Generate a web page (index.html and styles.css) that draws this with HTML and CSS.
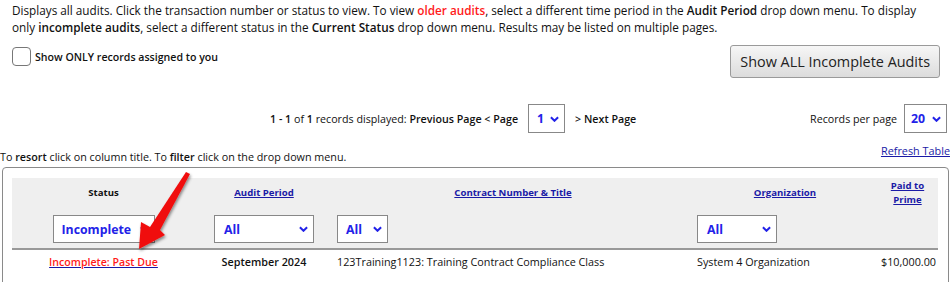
FILE: index.html
```html
<!DOCTYPE html>
<html>
<head>
<meta charset="utf-8">
<link rel="stylesheet" href="styles.css">
</head>
<body>
<p class="intro">Displays all audits. Click the transaction number or status to view. To view <b class="red">older audits</b>, select a different time period in the <b>Audit Period</b> drop down menu. To display only <b>incomplete audits</b>, select a different status in the <b>Current Status</b> drop down menu. Results may be listed on multiple pages.</p>

<div class="controls">
  <label class="check"><span class="box"></span><span>Show ONLY records assigned to you</span></label>
  <button class="btn">Show ALL Incomplete Audits</button>
</div>

<div class="paging">
  <div class="pager">
    <span><b>1 - 1</b> of <b>1</b> records displayed: <b>Previous Page &lt; Page</b></span>
    <div class="sel sel-page"><span>1</span><svg class="chev" viewBox="0 0 10 6" width="9" height="6"><path d="M1 1 L5 5 L9 1" fill="none" stroke="currentColor" stroke-width="2.2"/></svg></div>
    <b>&gt; Next Page</b>
  </div>
  <div class="perpage">
    <span>Records per page</span>
    <div class="sel sel-per"><span>20</span><svg class="chev" viewBox="0 0 10 6" width="9" height="6"><path d="M1 1 L5 5 L9 1" fill="none" stroke="currentColor" stroke-width="2.2"/></svg></div>
  </div>
</div>

<div class="tablebar">
  <span class="resort">To <b>resort</b> click on column title. To <b>filter</b> click on the drop down menu.</span>
  <a class="refresh" href="#">Refresh Table</a>
</div>

<div class="panel">
  <table class="grid">
    <colgroup><col class="c1"><col class="c2"><col class="c3"><col class="c4"><col class="c5"></colgroup>
    <thead>
      <tr class="titles">
        <th>Status</th>
        <th><a href="#">Audit Period</a></th>
        <th><a href="#">Contract Number &amp; Title</a></th>
        <th><a href="#">Organization</a></th>
        <th><a href="#">Paid to<br>Prime</a></th>
      </tr>
      <tr class="filters">
        <th class="center"><div class="sel sel-status"><span>Incomplete</span><svg class="chev" viewBox="0 0 10 6" width="9" height="6"><path d="M1 1 L5 5 L9 1" fill="none" stroke="currentColor" stroke-width="2.2"/></svg></div></th>
        <th class="center"><div class="sel sel-period"><span>All</span><svg class="chev" viewBox="0 0 10 6" width="9" height="6"><path d="M1 1 L5 5 L9 1" fill="none" stroke="currentColor" stroke-width="2.2"/></svg></div></th>
        <th class="left"><div class="sel sel-contract"><span>All</span><svg class="chev" viewBox="0 0 10 6" width="9" height="6"><path d="M1 1 L5 5 L9 1" fill="none" stroke="currentColor" stroke-width="2.2"/></svg></div></th>
        <th class="left"><div class="sel sel-org"><span>All</span><svg class="chev" viewBox="0 0 10 6" width="9" height="6"><path d="M1 1 L5 5 L9 1" fill="none" stroke="currentColor" stroke-width="2.2"/></svg></div></th>
        <th></th>
      </tr>
    </thead>
    <tbody>
      <tr class="row">
        <td class="center"><a class="status-link" href="#">Incomplete: Past Due</a></td>
        <td class="center"><b>September 2024</b></td>
        <td>123Training1123: Training Contract Compliance Class</td>
        <td>System 4 Organization</td>
        <td class="right">$10,000.00</td>
      </tr>
    </tbody>
  </table>
  <svg class="arrow" width="70" height="90" viewBox="0 0 70 90">
    <defs>
      <filter id="sh" x="-30%" y="-30%" width="160%" height="160%">
        <feDropShadow dx="1" dy="2" stdDeviation="1.5" flood-color="#000" flood-opacity="0.45"/>
      </filter>
    </defs>
    <polygon filter="url(#sh)" fill="#f01010" points="55,0 59,2 29,58 34,63 8,77 10,50 19,55"/>
  </svg>
</div>
</body>
</html>
```

FILE: styles.css
```css
* { box-sizing: border-box; }
body {
  margin: 0;
  font-family: "Open Sans", "Noto Sans", sans-serif;
  color: #111;
  background: #fff;
  width: 950px;
  height: 282px;
  overflow: hidden;
}
b { font-weight: 600; }
.red { color: #ff1a1a; }

.intro {
  margin: 0;
  padding: 2px 12px 0 12px;
  font-size: 11.75px;
  line-height: 17px;
}

.controls {
  display: flex;
  justify-content: space-between;
  align-items: flex-start;
  padding: 9px 10px 0 12px;
}
.check {
  display: flex;
  align-items: center;
  gap: 4px;
  font-size: 10.6px;
  font-weight: 600;
  margin-top: 2px;
}
.box {
  width: 19px;
  height: 19px;
  border: 1.5px solid #777;
  border-radius: 4px;
  background: #fff;
}
.btn {
  font-family: inherit;
  font-size: 14.4px;
  color: #222;
  height: 33px;
  padding: 0 9px;
  border: 1px solid #9a9a9a;
  border-radius: 3px;
  background: linear-gradient(#f6f6f6, #dcdcdc);
}

.paging {
  display: flex;
  justify-content: space-between;
  align-items: center;
  padding: 0 3px 0 270px;
  margin-top: 26px;
  font-size: 10.7px;
}
.pager {
  display: flex;
  align-items: center;
  gap: 10px;
}
.perpage {
  display: flex;
  align-items: center;
  gap: 7px;
}

.sel {
  display: flex;
  align-items: center;
  justify-content: space-between;
  height: 29px;
  border: 1px solid #888;
  background: #fff;
  color: #2222e8;
  font-weight: 700;
  font-size: 12.3px;
  padding: 0 5px 0 9px;
}
.chev { color: #2222e8; flex: none; }
.sel-page { width: 37px; padding-left: 8px; }
.sel-per { width: 43px; padding-left: 6px; }
.sel-status { width: 102px; height: 28px; padding-left: 8px; margin: 0 auto; }
.sel-period { width: 100px; height: 28px; margin: 0 auto; }
.sel-contract { width: 51px; height: 28px; padding-left: 8px; }
.sel-org { width: 80px; height: 28px; padding-left: 9px; }

.tablebar {
  display: flex;
  justify-content: space-between;
  align-items: flex-start;
  margin-top: 10px;
  font-size: 10.75px;
}
.resort { padding-top: 7px; line-height: 15px; }
.refresh { color: #1a1aa6; line-height: 15px; font-size: 10.85px; }

.panel {
  position: relative;
  margin: 2px 1px 0 2px;
  border: 1px solid #8a8a8a;
  border-radius: 4px;
  padding: 10px 10px 40px 9px;
}
.grid {
  width: 926px;
  table-layout: fixed;
  border-collapse: collapse;
}
.c1 { width: 183px; }
.c2 { width: 138px; }
.c3 { width: 360px; }
.c4 { width: 184px; }
.c5 { width: 61px; }
.grid thead { background: #efefef; }
.grid th {
  font-size: 9.6px;
  font-weight: 700;
  padding: 0 4px;
  text-align: center;
}
.grid th a { color: #1a1aa6; }
.titles th { height: 32px; line-height: 14px; padding-bottom: 2px; }
.filters th { height: 39px; padding-top: 5px; padding-bottom: 4px; vertical-align: top; }
.filters th.left { text-align: left; }
.grid thead tr.filters th { border-bottom: 2px solid #999; }
.row td {
  font-size: 10.8px;
  height: 24px;
  padding: 0 4px;
  vertical-align: middle;
}
.center { text-align: center; }
.right { text-align: right; }
.row td.right { padding-right: 3px; }
.status-link {
  color: #ff1a1a;
  font-weight: 600;
  font-size: 10.6px;
  text-decoration-color: #1a1aa6;
}
.row td b { font-weight: 600; }

.arrow {
  position: absolute;
  left: 128px;
  top: 4px;
  pointer-events: none;
}
```
